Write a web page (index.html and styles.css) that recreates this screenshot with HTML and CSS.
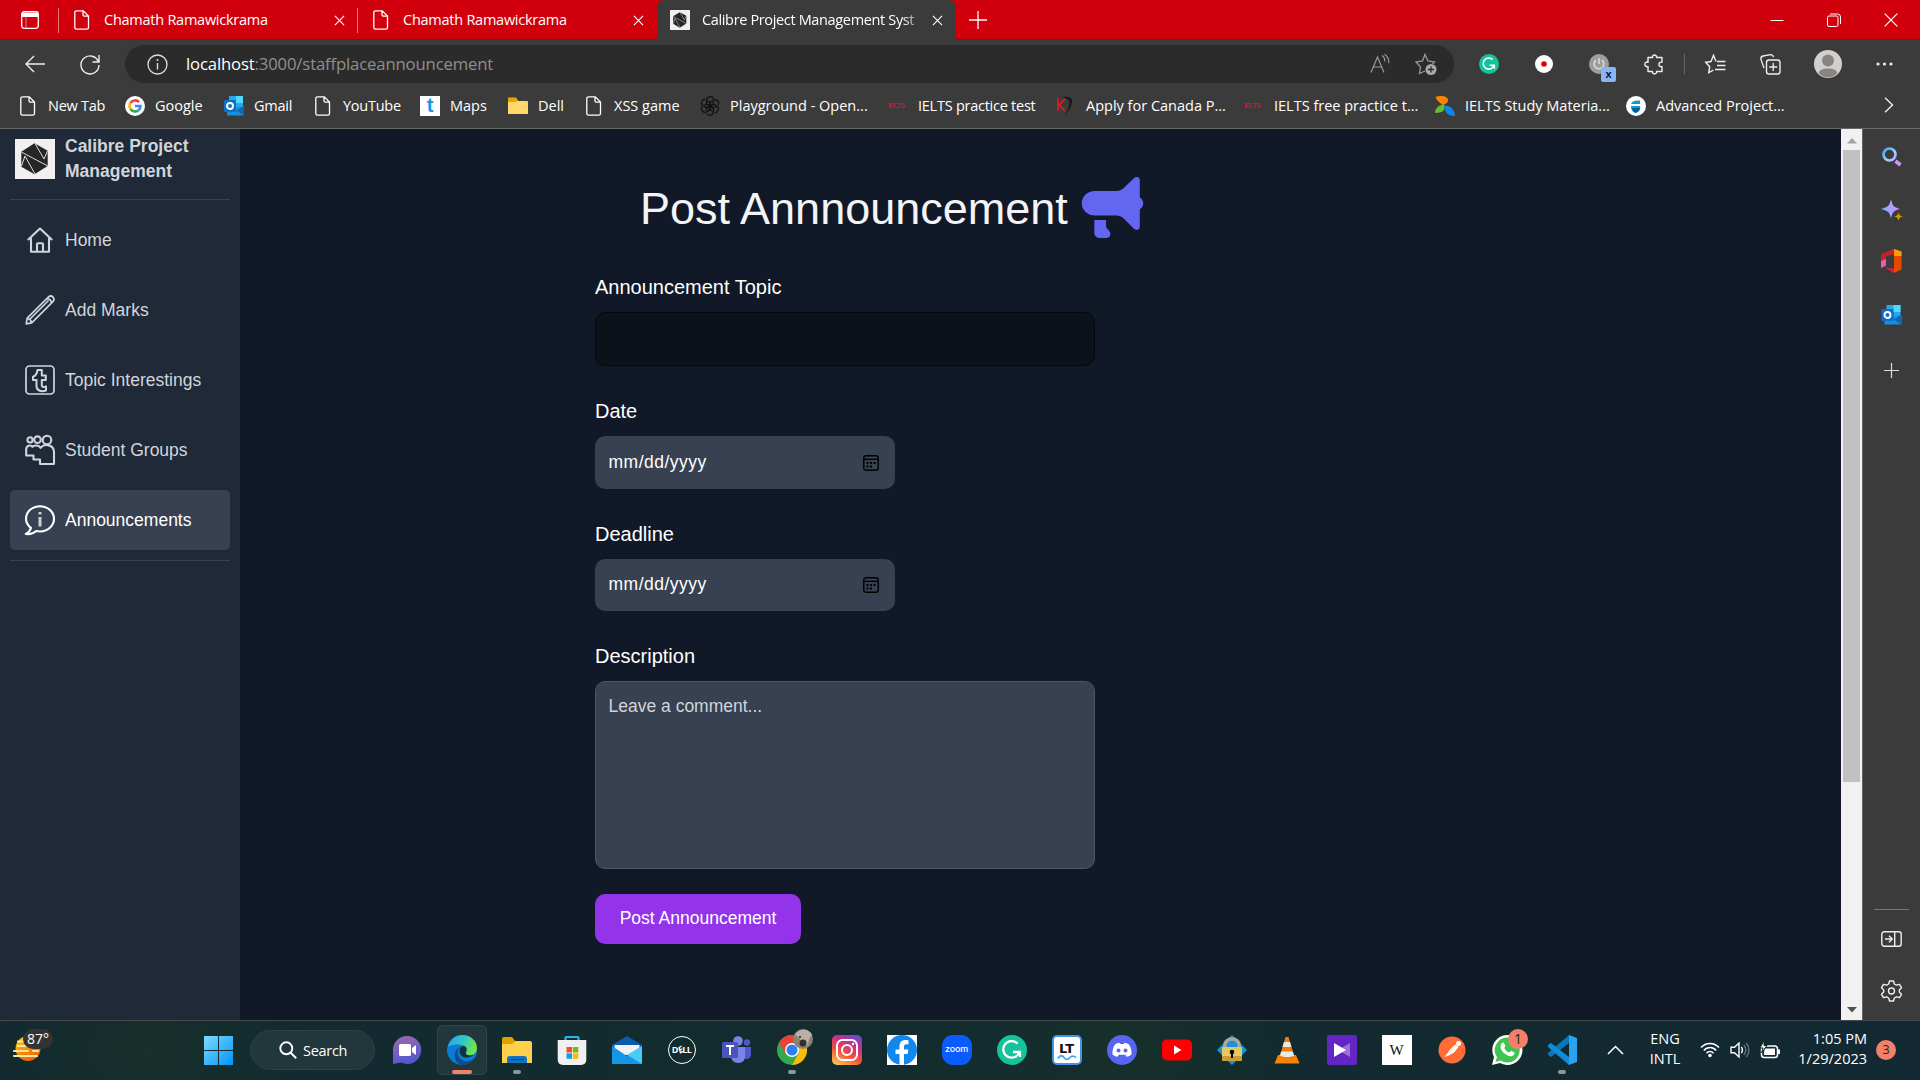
FILE: index.html
```html
<!DOCTYPE html>
<html lang="en">
<head>
<meta charset="utf-8">
<title>Calibre Project Management System</title>
<link rel="stylesheet" href="styles.css">
</head>
<body>
<svg class="defs" width="0" height="0">
  <defs>
    <symbol id="file" viewBox="0 0 20 20"><path d="M4.5.8h6.800l5.200 5.200v11.500a1.700 1.700 0 0 1-1.700 1.700H4.500a1.700 1.700 0 0 1-1.700-1.700V2.500A1.700 1.700 0 0 1 4.500.8zM11 1v3.500a1.700 1.700 0 0 0 1.700 1.700h3.600" fill="none" stroke="#fff" stroke-width="1.300"/></symbol>
    <symbol id="close" viewBox="0 0 12 12"><path d="M1 1l10 10M11 1L1 11" fill="none" stroke="#fff" stroke-width="1.200"/></symbol>
    <symbol id="outlook" viewBox="0 0 20 20"><path d="M5 0h14v14H5z" fill="#28a8ea"/><path d="M12 0h7v7h-7z" fill="#50d9ff"/><path d="M5 7h7v7H5z" fill="#0364b8"/><path d="M3 19.500V13l17-3v9.500z" fill="#1490df"/><path d="M20 10v9.500l-8-5z" fill="#1066b5"/><rect y="4" width="12" height="12" rx="1" fill="#0f6fc6"/><circle cx="6" cy="10" r="3" fill="none" stroke="#fff" stroke-width="1.900"/></symbol>
    <symbol id="grammarly" viewBox="0 0 30 30"><circle cx="15" cy="15" r="15" fill="#15c39a"/><path d="M20.500 8.500A8.300 8.300 0 1 0 22.500 17M16 17h7v5" fill="none" stroke="#fff" stroke-width="2.300"/></symbol>
    <symbol id="brand" viewBox="0 0 40 40"><path fill="#f1eff0" d="M0 0h40v40H0z"/><path fill="#242526" d="M19.500 4.300l13.200 7.400V27l-13.200 8.300-13.200-7.600v-15z"/><path d="M20 4.500L29 20l3.500-8M6.300 13l26.500 14M6.500 27L10 17l10 18" fill="none" stroke="#ddd" stroke-width="1"/></symbol>
    <symbol id="calendar" viewBox="0 0 16 16"><rect x=".8" y=".8" width="14.400" height="14.400" rx="2" fill="none" stroke="#000" stroke-width="1.400"/><path d="M1 4.300h14" stroke="#000" stroke-width="1.300"/><path d="M3.500 8h2m1.500 0h2m1.500 0h2M3.500 11.500h2m1.500 0h2" stroke="#000" stroke-width="1.900"/></symbol>
  </defs>
</svg>

<header class="chrome">
  <div class="tabstrip">
    <svg class="tab-menu" width="18" height="18" viewBox="0 0 18 18"><rect x=".7" y=".7" width="16.600" height="16.600" rx="2.500" fill="none" stroke="#fff" stroke-width="1.300"/><path d="M1 1.500h16V6H1z" fill="#fff"/><path d="M5 6v11" stroke="#fff" stroke-opacity=".5"/></svg>
    <div class="tab"><svg width="20" height="20"><use href="#file"/></svg><span class="tab-title">Chamath Ramawickrama</span><svg width="11" height="11"><use href="#close"/></svg></div>
    <div class="tab second"><svg width="20" height="20"><use href="#file"/></svg><span class="tab-title">Chamath Ramawickrama</span><svg width="11" height="11"><use href="#close"/></svg></div>
    <div class="tab active"><svg width="20" height="20"><use href="#brand"/></svg><span class="tab-title fade">Calibre Project Management Syst</span><svg width="11" height="11"><use href="#close"/></svg></div>
    <svg class="new-tab" width="18" height="18" viewBox="0 0 18 18"><path d="M9 0v18M0 9h18" stroke="#fff" stroke-width="1.300"/></svg>
    <div class="window-buttons">
      <svg width="14" height="14" viewBox="0 0 14 14"><path d="M.5 7.500h13" stroke="#fff"/></svg>
      <svg width="14" height="14" viewBox="0 0 14 14"><rect x=".5" y="3" width="10.500" height="10.500" rx="1.500" fill="none" stroke="#fff"/><path d="M3 1h7.500a3 3 0 0 1 3 3v7" fill="none" stroke="#fff"/></svg>
      <svg width="14" height="14" viewBox="0 0 14 14"><path d="M.7.7l12.600 12.600M13.300.7L.7 13.300" stroke="#fff" stroke-width="1.200"/></svg>
    </div>
  </div>

  <div class="toolbar">
    <div class="cell"><svg width="20" height="18" viewBox="0 0 20 18"><path d="M20 9H1M9 1L1 9l8 8" fill="none" stroke="#eee" stroke-width="1.400"/></svg></div>
    <div class="cell"><svg width="20" height="20" viewBox="0 0 20 20"><path d="M18.500 8A9 9 0 1 0 19 11M19 1v7h-6.500" fill="none" stroke="#eee" stroke-width="1.400"/></svg></div>
    <div class="address">
      <svg width="21" height="21" viewBox="0 0 21 21"><circle cx="10.500" cy="10.500" r="9.500" fill="none" stroke="#ddd" stroke-width="1.300"/><path d="M10.500 9v6.500" stroke="#ddd" stroke-width="1.400"/><circle cx="10.500" cy="6" r="1" fill="#ddd"/></svg>
      <span class="url"><b>localhost</b>:3000/staffplaceannouncement</span>
      <svg width="20" height="20" viewBox="0 0 20 20"><path d="M1 18.500L7.500 3 14 18.500M3.500 13h8M12 1.500c2 1.300 3 3.500 2.800 6M14.500.3c3 2 4.500 5.500 4.300 9" fill="none" stroke="#999" stroke-width="1.200"/></svg>
      <svg width="22" height="22" viewBox="0 0 22 22"><path d="M10 18l-5.500 2.500 1-6.500L1 9l6.500-1L10 1.500 13 8l6.500 1-2 2" fill="none" stroke="#999" stroke-width="1.300"/><circle cx="16" cy="16.500" r="5.500" fill="#aaa"/><path d="M16 13.500v6M13 16.500h6" stroke="#2b2b2b" stroke-width="1.300"/></svg>
    </div>
    <div class="extensions">
      <div class="cell"><svg width="20" height="20"><use href="#grammarly"/></svg></div>
      <div class="cell"><svg width="18" height="18"><circle cx="9" cy="9" r="9" fill="#fff"/><circle cx="9" cy="9" r="2.800" fill="#e60000"/></svg></div>
      <div class="cell power"><svg width="20" height="20" viewBox="0 0 20 20"><circle cx="10" cy="10" r="10" fill="#9d9d9d"/><path d="M7 6.200a4.800 4.800 0 1 0 6 0M10 4v6" fill="none" stroke="#ddd" stroke-width="1.500"/></svg><span class="power-badge">x</span></div>
      <div class="cell"><svg width="20" height="20" viewBox="0 0 20 20"><path d="M4 3.500h4.500c-.8-3.300 4.800-3.300 4 0H18v4.700c-4.200-1-4.200 5.400 0 4.300v5h-5.500c.8 3.300-4.800 3.300-4 0H4v-5c-4.200 1-4.200-5.400 0-4.300z" fill="none" stroke="#eee" stroke-width="1.400" stroke-linejoin="round"/></svg></div>
      <i class="toolbar-rule"></i>
      <div class="cell fav"><svg width="21" height="20" viewBox="0 0 21 20"><path d="M11 7.500L8.500 1.300 6 7.500l-5.300.7 4 4.500-1 6 4.800-2.700M12 7.500h8.500M12 11.500h8.500M10 15.500h10.500" fill="none" stroke="#eee" stroke-width="1.400"/></svg></div>
      <div class="cell"><svg width="21" height="21" viewBox="0 0 21 21"><path d="M4 14L1 5.500C.5 3.500 1 2.500 3 2l7.500-1.300c1.500 0 2.500.5 3 2.500" fill="none" stroke="#eee" stroke-width="1.300"/><rect x="6.500" y="6" width="13.500" height="14" rx="2.500" fill="none" stroke="#eee" stroke-width="1.400"/><path d="M13.200 9v8M9.200 13h8" stroke="#eee" stroke-width="1.300"/></svg></div>
      <div class="cell"><svg width="28" height="28" viewBox="0 0 28 28"><circle cx="14" cy="14" r="14" fill="#d2d0ce"/><circle cx="14" cy="10.500" r="6" fill="#8a8481"/><path d="M4.500 22.500C7 17 21 17 23.500 22.500 19 29 9 29 4.500 22.500z" fill="#8a8481"/></svg></div>
      <div class="cell dots"><svg width="17" height="4" viewBox="0 0 17 4"><g fill="#eee"><circle cx="2" cy="2" r="1.600"/><circle cx="8.500" cy="2" r="1.600"/><circle cx="15" cy="2" r="1.600"/></g></svg></div>
    </div>
  </div>

  <nav class="bookmarks">
    <div class="bm w107 tight"><svg width="20" height="20"><use href="#file"/></svg>New Tab</div>
    <div class="bm w99"><svg width="20" height="20" viewBox="0 0 20 20"><circle cx="10" cy="10" r="10" fill="#fff"/><g fill="none" stroke-width="2.600"><path d="M5.500 7A5.500 5.500 0 0 1 14 6" stroke="#ea4335"/><path d="M5.500 13a5.500 5.500 0 0 1 0-6" stroke="#fbbc05"/><path d="M13.500 14.200A5.500 5.500 0 0 1 5.500 13" stroke="#34a853"/><path d="M10 10h5.500c0 2-.8 3.300-2 4.200" stroke="#4285f4"/></g></svg>Google</div>
    <div class="bm w89 tight"><svg width="20" height="20"><use href="#outlook"/></svg>Gmail</div>
    <div class="bm w107 tight"><svg width="20" height="20"><use href="#file"/></svg>YouTube</div>
    <div class="bm w88"><span class="t-icon">t</span>Maps</div>
    <div class="bm w76"><svg width="20" height="20" viewBox="0 0 20 20"><path d="M0 2h8l2 3h9a1 1 0 0 1 1 1v12H0z" fill="#ffd76a"/><path d="M0 1.500h8l1.500 2.300L8 6H0z" fill="#e5a800"/></svg>Dell</div>
    <div class="bm w116"><svg width="20" height="20"><use href="#file"/></svg>XSS game</div>
    <div class="bm w188"><svg width="20" height="20" viewBox="0 0 20 20"><g fill="none" stroke="#111" stroke-width="1.200"><path id="petal" d="M6.500 8V4.500C6.500.5 11.500-.5 13.500 2.500M6.500 8l6.500 4 3-1.800"/><use href="#petal" transform="rotate(60 10 10)"/><use href="#petal" transform="rotate(120 10 10)"/><use href="#petal" transform="rotate(180 10 10)"/><use href="#petal" transform="rotate(240 10 10)"/><use href="#petal" transform="rotate(300 10 10)"/></g></svg>Playground - Open...</div>
    <div class="bm w168 tight"><span class="ielts">IELTS</span>IELTS practice test</div>
    <div class="bm w188"><svg width="20" height="20" viewBox="0 0 20 20"><path d="M6 1c5-1 10 0 10 4s-3 10-7 14c3-5 5-9 4.500-13S9 2 6 1z" fill="#161616"/><path d="M2 2v13M9 3L3 9l6 6" fill="none" stroke="#c8202c" stroke-width="1.900"/></svg>Apply for Canada P...</div>
    <div class="bm w191"><span class="ielts">IELTS</span>IELTS free practice t...</div>
    <div class="bm w191"><svg width="20" height="20" viewBox="0 0 20 20"><path d="M.5 1C5-1 13 0 13 4c0 3-3 4-5 5C5 7 2 5 .5 1z" fill="#ff8200"/><path d="M9 8c2 5 0 9-9 9 0-5 4-8 9-9z" fill="#65bc2e"/><path d="M9.500 10c5-1 10 3 10.500 10-6 0-10-2-10.500-10z" fill="#0a86ee"/></svg>IELTS Study Materia...</div>
    <div class="bm w191"><svg width="20" height="20" viewBox="0 0 20 20"><circle cx="10" cy="10" r="10" fill="#fff"/><path d="M5 8c1-3 5-4 9-3.500V8zM5 10h9c1 3-1 6-4.500 7C6 16 5 13 5 10z" fill="#1497d1"/><path d="M6 12h8c0 2-2 4-4.500 5C8 16 6.500 14 6 12z" fill="#075a92"/></svg>Advanced Project...</div>
    <svg class="more" width="10" height="16" viewBox="0 0 10 16"><path d="M1 .8L8.500 8 1 15.200" fill="none" stroke="#eee" stroke-width="1.400"/></svg>
  </nav>
</header>

<div class="viewport">
  <aside class="sidebar">
    <div class="brand"><svg width="40" height="40"><use href="#brand"/></svg><span>Calibre Project<br>Management</span></div>
    <nav class="menu">
      <a class="item"><svg width="30" height="30" viewBox="0 0 30 30"><path d="M2.800 15L15 3.600 27.200 15M6 13v13.800h18V13M12 26.500v-7.300a1 1 0 0 1 1-1h4a1 1 0 0 1 1 1v7.300"/></svg>Home</a>
      <a class="item"><svg class="thin" width="30" height="30" viewBox="0 0 30 30"><path d="M1.200 28.800l1-5.600L23.300 2.100c3.500-3 7.500 1.500 4.600 4.600L6.700 27.800zM22 3.600c2.500.2 4.200 2 4.400 4.400M2.500 23.500c2 .3 3.500 1.800 4 4M5 24L23.500 5.500"/></svg>Add Marks</a>
      <a class="item"><svg class="thin" width="30" height="30" viewBox="0 0 30 30"><rect x="1" y="1" width="28" height="28" rx="3.500"/><path class="t-outline" d="M12.500 5h4.300v5.500h4V15h-4v5.300c0 2 2 2 4.200 1v4.200c-4 1.500-9.500.8-9.500-4.500v-6H8v-3.300c2.500-.8 4-3 4.500-6.700z"/></svg>Topic Interestings</a>
      <a class="item"><svg width="30" height="30" viewBox="0 0 30 30"><circle cx="5" cy="4.900" r="2.600"/><circle cx="12.500" cy="4.700" r="3.300"/><circle cx="22" cy="5" r="4.300"/><path d="M1.200 20.500v-6c0-4 4-5.200 6.300-2.700 1.800-1.800 6.300-2 8 1 4-4.500 13.500-3.500 13.500 4.500V29H15v-4.500H8.500v-4z"/></svg>Student Groups</a>
      <a class="item current"><svg width="30" height="30" viewBox="0 0 30 30"><path d="M6 22.800C3 20.500 1 17.500 1 13.700 1 6.700 7.300 1.200 15 1.200S29 6.800 29 13.800 22.700 26.500 15 26.500l-4-.5C8.500 28.500 4 29.300.8 29 3.500 27.500 5.500 25 6 22.800z"/><path class="i-stem" d="M15 12v9.500M15 7v2.600"/></svg>Announcements</a>
    </nav>
  </aside>

  <main class="content">
    <h1><span>Post Annnouncement</span><svg width="61" height="61" viewBox="0 0 57 61" preserveAspectRatio="none"><path fill="#6366f1" d="M12 14h20c3 0 5-1 7-3L48.500 1.200C50.500-.9 54 0 54 3v17.500a7 7 0 0 1 0 11.800V50c0 3-3.500 3.900-5.500 1.800L39 41.500c-2-2-4-3-7-3H12a12.200 12.200 0 0 1 0-24.500zM11.500 43h11v6c0 3 4 4 4 8 0 2.500-1.500 4-4 4H17c-3 0-5.500-2-5.500-5z"/></svg></h1>
    <label>Announcement Topic</label>
    <div class="field topic"></div>
    <label>Date</label>
    <div class="field date"><span>mm/dd/yyyy</span><svg width="16" height="16"><use href="#calendar"/></svg></div>
    <label>Deadline</label>
    <div class="field date deadline"><span>mm/dd/yyyy</span><svg width="16" height="16"><use href="#calendar"/></svg></div>
    <label>Description</label>
    <div class="field comment">Leave a comment...</div>
    <div class="submit">Post Announcement</div>
  </main>

  <div class="scrollbar">
    <svg width="10" height="6"><path d="M5 0l5 5.500H0z" fill="#a3a3a3"/></svg>
    <div class="thumb"></div>
    <svg class="down" width="10" height="6"><path d="M5 5.500L0 0h10z" fill="#505050"/></svg>
  </div>

  <aside class="edgebar">
    <svg width="20" height="20" viewBox="0 0 20 20"><defs><linearGradient id="sg" x2="1" y2="1"><stop stop-color="#4f9df5"/><stop offset=".6" stop-color="#8ed8ff"/><stop offset="1" stop-color="#d59bff"/></linearGradient></defs><circle cx="7.500" cy="7.500" r="6" fill="none" stroke="url(#sg)" stroke-width="2.600"/><path d="M13.500 14l5 4" stroke="#c798f5" stroke-width="3.600"/></svg>
    <svg class="e2" width="22" height="22" viewBox="0 0 22 22"><defs><linearGradient id="sp" x2="1"><stop stop-color="#78b4ff"/><stop offset="1" stop-color="#d98cff"/></linearGradient></defs><path d="M10 0c1.500 7 2.500 8 9 10-6.500 1.500-7.500 3-9 9.500C8.500 13 7.500 12 0 10 7 8 8.500 7 10 0z" fill="url(#sp)"/><path d="M17.500 13c.5 3 1.500 4 4.500 4.500-3 .5-4 1.500-4.500 4.500-.5-3-1.500-4-4.500-4.500 3-.5 4-1.500 4.500-4.500z" fill="#d39a10"/></svg>
    <svg class="e3" width="21" height="24" viewBox="0 0 21 24"><path d="M13 0l7.500 2.500v18L13 24z" fill="#e34a00"/><path d="M13 0l7.500 2.500V7H13z" fill="#ff9a00"/><path d="M13 0v5L5 7.500v9L0 19V5z" fill="#c4202d"/><path d="M0 12l5-2v6.500L0 19z" fill="#e85caf"/><path d="M4 18.500l9 1V24z" fill="#d6213d"/></svg>
    <svg class="e4" width="21" height="20"><use href="#outlook"/></svg>
    <svg class="e5" width="15" height="15" viewBox="0 0 15 15"><path d="M7.500 0v15M0 7.500h15" stroke="#ddd" stroke-width="1.200"/></svg>
    <i></i>
    <svg class="e6" width="21" height="16" viewBox="0 0 21 16"><rect x=".8" y=".8" width="19.400" height="14.400" rx="2.500" fill="none" stroke="#eee" stroke-width="1.400"/><path d="M13.700 1v14M4 8h7M8 4.800L11.200 8 8 11.200" fill="none" stroke="#eee" stroke-width="1.400"/></svg>
    <svg class="e7" width="21" height="22" viewBox="0 0 21 22"><path d="M8.500 1h4l.8 3 2.200 1.200 3-.9 2 3.400L18.300 10v2l2.200 2.300-2 3.400-3-.9-2.200 1.200-.8 3h-4l-.8-3-2.200-1.200-3 .9-2-3.400L2.700 12v-2L.5 7.700l2-3.400 3 .9L7.700 4z" fill="none" stroke="#eee" stroke-width="1.400" stroke-linejoin="round"/><circle cx="10.500" cy="11" r="3" fill="none" stroke="#eee" stroke-width="1.400"/></svg>
  </aside>
</div>

<footer class="taskbar">
  <div class="weather"><svg width="28" height="26" viewBox="0 0 28 26"><defs><linearGradient id="sun" x2=".5" y2="1"><stop stop-color="#ffd400"/><stop offset="1" stop-color="#ee6405"/></linearGradient></defs><circle cx="15" cy="12.500" r="12.500" fill="url(#sun)"/><path d="M5 5.500h8M5 10h11M1 15h14M20 15h5M1 20h23" stroke="#ffe3a5" stroke-width="2.200" stroke-linecap="round"/></svg><span>87°</span></div>
  <div class="apps">
    <svg class="start" width="29" height="29" viewBox="0 0 29 29"><defs><linearGradient id="win" x2="1" y2="1"><stop stop-color="#7bdcff"/><stop offset="1" stop-color="#0094f8"/></linearGradient></defs><path d="M0 0h14v14H0zM15 0h14v14H15zM0 15h14v14H0zM15 15h14v14H15z" fill="url(#win)"/></svg>
    <div class="search"><svg width="18" height="18" viewBox="0 0 18 18"><circle cx="7.300" cy="7.300" r="6" fill="none" stroke="#fff" stroke-width="1.900"/><path d="M11.700 11.700l5.500 5.500" stroke="#fff" stroke-width="2"/></svg>Search</div>
    <div class="app chat"><svg width="30" height="30" viewBox="0 0 30 30"><defs><linearGradient id="cg" x2=".3" y2="1"><stop stop-color="#a06aa8"/><stop offset="1" stop-color="#5558d0"/></linearGradient></defs><path d="M15 1a14 14 0 1 1-6 26.500L1 29V15A14 14 0 0 1 15 1z" fill="url(#cg)"/><rect x="7" y="9" width="12" height="12" rx="1.500" fill="#fff"/><path d="M20 13l4-3v10l-4-3z" fill="#fff"/></svg></div>
    <div class="app edge"><svg width="30" height="30" viewBox="0 0 30 30"><defs><linearGradient id="eg" x2="1" y2=".3"><stop stop-color="#26a8e4"/><stop offset=".6" stop-color="#35c6c8"/><stop offset="1" stop-color="#70e548"/></linearGradient></defs><circle cx="15" cy="15" r="15" fill="#0b7cd3"/><path d="M1 12C3 4 9 0 15 0c9 0 15 6 15 13 0 5-4 8-9 7-3-.5-3-2-2-4 1-3-1-6-5-6C8 9 3 10 1 12z" fill="url(#eg)"/><path d="M13 12c-4 3-3 12 4 14 4 1 8-1 10-3-2 5-7 7-12 7-7-1-11-13-2-18z" fill="#114a8b"/><path d="M13 13.500c-1.500 4 1 9 6 9 3 0 6-1 8-2.500-3 1-6 .5-7.500-.5-1-.5-.8-2 0-3.500 1-3-1-5-3.500-5-1.500.5-2.500 1.500-3 2.500z" fill="#12333a"/></svg></div>
    <div class="app run"><svg width="30" height="30" viewBox="0 0 30 30"><path d="M0 4a2 2 0 0 1 2-2h8l3 4-3 4H0z" fill="#e2a000"/><path d="M0 9h10l3-3h15a2 2 0 0 1 2 2v20H0z" fill="#ffd04c"/><path d="M5 28v-4a3 3 0 0 1 3-3h14a3 3 0 0 1 3 3v4z" fill="#0f74c4"/><path d="M8.500 24.500h13" stroke="#064f91" stroke-width="1.300"/></svg></div>
    <div class="app"><svg width="30" height="30" viewBox="0 0 30 30"><path d="M8.500 7V3a1 1 0 0 1 1-1h11a1 1 0 0 1 1 1v4" fill="none" stroke="#27b5ee" stroke-width="2.200"/><path d="M.7 5h28.600v20a5 5 0 0 1-5 5H5.700a5 5 0 0 1-5-5z" fill="#f0f0f0"/><path d="M9.500 12H15v5.500H9.500z" fill="#f25022"/><path d="M15.800 12h5.500v5.500h-5.500z" fill="#7fba00"/><path d="M9.500 18.300H15v5.500H9.500z" fill="#00a4ef"/><path d="M15.800 18.300h5.500v5.500h-5.500z" fill="#ffb900"/></svg></div>
    <div class="app"><svg width="30" height="30" viewBox="0 0 30 30"><path d="M0 10L15 1l15 9v5H0z" fill="#0b5cad"/><path d="M2.500 10h25v10h-25z" fill="#f3f3f3"/><path d="M0 11l15 10L30 11v18H0z" fill="#1596e6"/><path d="M30 11v18L15 20z" fill="#45cdf5"/></svg></div>
    <div class="app"><span class="dell">D<i>E</i>LL</span></div>
    <div class="app"><svg width="30" height="30" viewBox="0 0 30 30"><circle cx="25" cy="7.500" r="3.200" fill="#5059c9"/><path d="M20 12h9v7c0 3-2 5-4.500 5S20 22 20 19z" fill="#5059c9"/><circle cx="16" cy="6" r="4.800" fill="#7b83eb"/><path d="M9 12h14v9c0 5-3 7-7 7s-7-3-7-7z" fill="#7b83eb"/><rect y="7" width="16" height="16" rx="1.500" fill="#4b53bc"/><path d="M4 11h8M8 11v9" stroke="#fff" stroke-width="2"/></svg></div>
    <div class="app run"><svg width="36" height="36" viewBox="0 0 36 36" class="gchrome"><circle cx="15" cy="21" r="15" fill="#34a853"/><path d="M2 13.500A15 15 0 0 1 28 13.500H15L8.500 25z" fill="#ea4335"/><path d="M28 13.500A15 15 0 0 1 15 36l6.500-11.500L22 13.500z" fill="#fbbc05"/><circle cx="15" cy="21" r="7" fill="#fff"/><circle cx="15" cy="21" r="5.500" fill="#2f7df0"/><circle cx="26" cy="10" r="10" fill="#8b8175"/><path d="M18 5.500C22-1.500 33-.5 35 6c-3 3-3 6-4 9-2 4-8 2-7-3-1-3-4-5-6-6.500z" fill="#b9b0a5"/><circle cx="26" cy="14" r="3.500" fill="#36302b"/><circle cx="23" cy="8" r="1" fill="#28221d"/></svg></div>
    <div class="app"><svg width="30" height="30" viewBox="0 0 30 30"><defs><linearGradient id="ig" x1=".2" y1="1" x2=".7" y2="0"><stop stop-color="#fdc04e"/><stop offset=".4" stop-color="#f0503c"/><stop offset=".75" stop-color="#c52d8f"/><stop offset="1" stop-color="#6a4bd0"/></linearGradient></defs><rect width="30" height="30" rx="5" fill="url(#ig)"/><rect x="5" y="5" width="20" height="20" rx="5.500" fill="none" stroke="#fff" stroke-width="2"/><circle cx="15" cy="15" r="5" fill="none" stroke="#fff" stroke-width="2"/><circle cx="21" cy="9" r="1.200" fill="#fff"/></svg></div>
    <div class="app"><svg width="30" height="30" viewBox="0 0 30 30"><path fill="#fff" d="M0 0h30v30H0z"/><circle cx="15" cy="15" r="15" fill="#1188ee"/><path d="M12.500 30V19H8.500v-4.500h4v-3.300c0-4 2.300-6.200 6-6.200 1.700 0 3 .3 3 .3v4h-2c-2 0-2.500 1-2.500 2.500v2.700h4.300l-.7 4.500H17v11z" fill="#fff"/></svg></div>
    <div class="app"><span class="zoom">zoom</span></div>
    <div class="app"><svg width="30" height="30"><use href="#grammarly"/></svg></div>
    <div class="app"><span class="lt">LT<svg width="18" height="5" viewBox="0 0 18 5"><path d="M0 3.500C2 0 4 0 6 2.500s4 2.500 6 0 4-1.500 6 0" fill="none" stroke="#45a5f0" stroke-width="1.800"/></svg></span></div>
    <div class="app"><svg width="30" height="30" viewBox="0 0 30 30"><circle cx="15" cy="15" r="15" fill="#5865f2"/><path d="M8 9.500c1.500-1 3-1.500 4.500-1.700l.7 1.200h3.600l.7-1.200c1.500.2 3 .7 4.500 1.700 2 3 2.800 6.500 2.500 10-1.500 1.200-3 2-5 2.300l-1.200-2h-6.600l-1.200 2c-2-.3-3.500-1.100-5-2.300-.3-3.500.5-7 2.500-10z" fill="#fff"/><circle cx="11.500" cy="15.500" r="2" fill="#5865f2"/><circle cx="18.500" cy="15.500" r="2" fill="#5865f2"/></svg></div>
    <div class="app"><svg width="30" height="22" viewBox="0 0 30 22"><rect y=".5" width="30" height="21" rx="5" fill="#f00"/><path d="M12 6.500v9l7.500-4.500z" fill="#fff"/></svg></div>
    <div class="app"><svg width="30" height="30" viewBox="0 0 30 30"><path d="M15 0l15 15-15 15L0 15z" fill="#1994dc"/><path d="M8 14V9.500a7 5.500 0 0 1 14 0V14" fill="none" stroke="#a9a9a4" stroke-width="3.500"/><rect x="5" y="12" width="20" height="14" rx="1" fill="#e9c760"/><path d="M5 21h20v4a1 1 0 0 1-1 1H6a1 1 0 0 1-1-1z" fill="#c99a3b"/><circle cx="15" cy="17" r="2.300"/><path d="M14 18h2v5h-2z"/></svg></div>
    <div class="app"><svg width="30" height="30" viewBox="0 0 30 30"><path d="M6 20h18l3.500 8.500h-25z" fill="#f58400"/><path d="M13.500 2h3l6 20c-3 3-12 3-15 0z" fill="#f27d00"/><path d="M12 7h6l1.500 5h-9zM9.200 16.500h11.600l1.200 4c-3 2-11 2-14 0z" fill="#e9eaec"/></svg></div>
    <div class="app"><svg width="30" height="30" viewBox="0 0 30 30"><rect width="30" height="30" rx="2" fill="#6425c5"/><path d="M23 8v14l-12-7z" fill="#b69be4" opacity=".65"/><path d="M7 8v14l12-7z" fill="#fff"/></svg></div>
    <div class="app"><span class="wiki">W</span></div>
    <div class="app"><svg width="30" height="30" viewBox="0 0 30 30"><circle cx="15" cy="15" r="13.500" fill="#ff6c37"/><path d="M8 22c3-4 6-8 11-12M10 21l7-4 4-5-3-2-5 5z" fill="#fff" stroke="#fff" stroke-width="1"/><circle cx="21.500" cy="8.500" r="2.500" fill="#fff"/></svg></div>
    <div class="app whatsapp"><svg width="30" height="30" viewBox="0 0 30 30"><path d="M15 0a15 15 0 1 1-7 28L0 30l2-8A15 15 0 0 1 15 0z" fill="#fff"/><path d="M15 2.500A12.500 12.500 0 1 1 8.500 25.500L3.500 27 5 22A12.500 12.500 0 0 1 15 2.500z" fill="#3fc351"/><path d="M10 8c1-1 2-.5 2.300.5l1 2.500c-.5 1.500-1.300 1.500-.8 2.500 1 2 2.500 3.300 4.500 4 1-.3 1.500-2 2.500-1.500l3 1.500c.5 3-3 4.500-5.500 3.500C12 19 9 16 8.500 12c0-2 .5-3 1.500-4z" fill="#fff"/></svg><span>1</span></div>
    <div class="app run"><svg width="30" height="30" viewBox="0 0 30 30"><path d="M22 0l8 3v24l-8 3z" fill="#2ba3ee"/><path d="M22 0v8L4 22l-3-2v-2z" fill="#0877bd"/><path d="M22 30v-8L4 8l-3 2v2z" fill="#118bd5"/></svg></div>
  </div>
  <div class="tray">
    <svg class="up" width="17" height="10" viewBox="0 0 17 10"><path d="M1 9l7.500-7.500L16 9" fill="none" stroke="#fff" stroke-width="1.500"/></svg>
    <div class="lang">ENG<br>INTL</div>
    <svg width="20" height="16" viewBox="0 0 20 16"><g fill="none" stroke="#fff" stroke-width="1.500"><path d="M1 5.500c5-5.500 13-5.500 18 0M3.800 8.500c3.500-4 9-4 12.400 0M6.500 11.300c2-2.300 5-2.300 7 0"/></g><circle cx="10" cy="13.500" r="1.800" fill="#fff"/></svg>
    <svg width="20" height="18" viewBox="0 0 20 18"><path d="M1 6.200h3.500L9 2v14l-4.500-4.200H1z" fill="none" stroke="#fff" stroke-width="1.400"/><path d="M11.300 6c1.500 2 1.500 4 0 6" fill="none" stroke="#fff" stroke-width="1.400"/><path d="M13.800 4c2.500 3 2.500 7 0 10M16.300 2c3.500 4 3.500 10 0 14" fill="none" stroke="#667a7c" stroke-width="1.300"/></svg>
    <svg width="20" height="18" viewBox="0 0 20 18"><rect x="1.500" y="5" width="16" height="11.500" rx="2.800" fill="none" stroke="#fff" stroke-width="1.500"/><path d="M5 7.500h10v6.500H4v-3zM18 8.500h2v4.500h-2z" fill="#fff"/><path d="M4-.500L0 7h3L1.500 12 7 4.500H4z" fill="#fff" stroke="#12282c"/></svg>
    <div class="clock">1:05 PM<br>1/29/2023</div>
    <span class="count">3</span>
  </div>
</footer>
</body>
</html>
```

FILE: styles.css
```css
* { box-sizing: border-box; }
html, body { margin: 0; height: 100%; overflow: hidden; }
body {
  display: flex;
  flex-direction: column;
  background: #111827;
  color: #fff;
  font-family: "Open Sans", "Noto Sans", sans-serif;
  font-size: 14.5px;
}
svg { display: block; flex: none; overflow: visible; }
.defs { position: absolute; }

/* browser window */
.chrome { flex: 0 0 129px; background: #3b3b3b; border-bottom: 1px solid #69696b; }
.tabstrip { display: flex; align-items: center; height: 40px; background: #d1000c; box-shadow: inset 0 -2px 2px -1px #a0000d; }
.tab-menu { margin: 0 20px 0 21px; }
.tab { display: flex; align-items: center; width: 299px; height: 40px; padding: 0 13px; position: relative; }
.tab:not(.active)::before { content: ""; position: absolute; left: -1px; top: 8px; width: 1px; height: 25px; background: #e77; }
.tab-title { flex: 1; margin: 0 0 0 12px; padding-bottom: 2px; white-space: nowrap; letter-spacing: -0.25px; }
.tab.active { width: 299px; background: #3b3b3b; border-radius: 7px 7px 0 0; }
.fade { margin-right: 8px; letter-spacing: -0.35px; mask-image: linear-gradient(90deg, #000 90%, transparent 101%); }
.new-tab { margin-left: 13px; }
.window-buttons { display: flex; gap: 43px; margin-left: auto; padding-right: 22px; }

.toolbar { display: flex; align-items: center; height: 48px; padding-left: 7px; }
.cell { display: flex; align-items: center; justify-content: center; width: 55px; flex: none; }
.address { display: flex; align-items: center; width: 1329px; height: 38px; margin-left: 8px; border-radius: 19px; background: #2b2b2b; padding: 0 17px 0 22px; }
.url { flex: 1; margin-left: 18px; padding-bottom: 1px; font-size: 16.7px; letter-spacing: -0.15px; color: #8f8f8f; }
.url b { font-weight: 400; color: #fff; }
.address svg:last-child { margin-left: 25px; }
.extensions { display: flex; align-items: center; margin-left: 7px; }
.power { position: relative; }
.power-badge { position: absolute; left: 30px; top: 13px; width: 15px; height: 15px; border-radius: 2px; background: #8ab4f8; color: #111; font: bold 11px/14px "Liberation Sans", sans-serif; text-align: center; }
.toolbar-rule { width: 1px; height: 20px; margin: 0 3px; background: #666; }
.dots { margin-left: 2px; }
.fav { margin-left: 0; }
.fav + .cell + .cell { margin-left: 2px; }

.bookmarks { display: flex; align-items: center; height: 36px; padding: 0 0 2px 18px; }
.bm { display: flex; align-items: center; gap: 10px; flex: none; white-space: nowrap; }
.bm > :first-child { margin-top: 2px; }
.tight { letter-spacing: -0.25px; }
.w76 { width: 76px; } .w88 { width: 88px; } .w89 { width: 89px; } .w99 { width: 99px; }
.w107 { width: 107px; } .w116 { width: 116px; } .w168 { width: 168px; } .w188 { width: 188px; } .w191 { width: 191px; }
.t-icon { width: 20px; height: 20px; background: #fff; color: #1597e5; font: bold 20px/18px "Liberation Sans", sans-serif; text-align: center; }
.ielts { width: 20px; color: #d2122e; font: bold 7px/8px "Liberation Sans", sans-serif; letter-spacing: -0.6px; }
.more { margin-left: 67px; }

/* page */
.viewport { flex: 1; display: flex; min-height: 0; font-family: "Liberation Sans", Arial, sans-serif; }
.sidebar { width: 240px; flex: none; background: #1f2937; color: #d1d5db; padding: 0 10px; font-size: 17.5px; line-height: 25px; }
.brand { display: flex; gap: 10px; height: 71px; padding: 5px 5px 0; border-bottom: 1px solid #374151; font-weight: 700; }
.brand svg { margin-top: 5px; }
.menu { display: flex; flex-direction: column; gap: 10px; padding: 10px 0; border-bottom: 1px solid #374151; }
.item { display: flex; align-items: center; gap: 10px; height: 60px; padding-left: 15px; border-radius: 5px; }
.item svg { fill: none; stroke: currentColor; stroke-width: 2.1; stroke-linejoin: round; }
.item svg.thin { stroke-width: 1.7; }
.item .t-outline { stroke-width: 2; }
.item .i-stem { stroke-width: 3; opacity: .75; }
.current { background: #374151; color: #fff; }

.content { flex: 1; padding: 41px 0 0 355px; font-size: 17.5px; }
h1 { display: flex; align-items: flex-start; gap: 14px; height: 104px; margin: 0 0 0 45px; padding-top: 7px; font-size: 45px; font-weight: 400; line-height: 50px; color: #f3f4f6; }
h1 span { padding-top: 7px; }
label { display: block; height: 38px; padding-top: 1px; font-size: 20px; line-height: 25px; }
.field { border-radius: 10px; background: #374151; }
.topic { width: 500px; height: 54px; margin-bottom: 32px; background: #0d1119; border: 1px solid #05080e; }
.date { display: flex; align-items: center; justify-content: space-between; width: 300px; height: 53px; margin-bottom: 32px; padding: 0 16px 0 13.5px; letter-spacing: .5px; }
.deadline { height: 52px; padding-bottom: 1px; }
.comment { width: 500px; height: 188px; padding: 12px 12.500px; border: 1px solid #4b5563; line-height: 25px; color: #d1d5db; }
.submit { width: 206px; height: 50px; margin-top: 25px; border-radius: 10px; background: #9333ea; line-height: 48px; text-align: center; }

.scrollbar { display: flex; flex-direction: column; align-items: center; width: 21px; background: #f1f1f1; padding-top: 9px; }
.thumb { width: 17px; height: 632px; margin-top: 6px; background: #c1c1c1; }
.down { margin: auto 0 7px; }
.edgebar { display: flex; flex-direction: column; align-items: center; width: 58px; background: #3b3b3b; border-left: 1px solid #656565; padding-top: 18px; }
.e2 { margin-top: 32px; } .e3 { margin-top: 28px; } .e4 { margin-top: 32px; } .e5 { margin-top: 38px; }
.edgebar i { width: 35px; height: 1px; background: #777; margin-top: auto; }
.e6 { margin-top: 21px; } .e7 { margin: 33px 0 18px; }

/* taskbar */
.taskbar {
  flex: 0 0 60px; display: flex; align-items: center; border-top: 1px solid #42494e; padding-bottom: 1px;
  background:
    radial-gradient(ellipse 150px 100px at 150px 30px, #17302a, transparent),
    radial-gradient(ellipse 160px 100px at 1120px 30px, #17302a, transparent),
    linear-gradient(90deg, #122a30, #132c2e 50%, #122a30 80%, #132935);
}
.weather { position: relative; width: 204px; padding: 0 0 3px 13px; }
.weather span { position: absolute; left: 23px; top: -7px; width: 30px; height: 20px; border-radius: 10px; background: #333; font-size: 14px; line-height: 19px; text-align: center; }
.apps { display: flex; align-items: center; }
.search { display: flex; align-items: center; gap: 6px; width: 125px; height: 40px; margin: 0 4px 0 17px; padding-left: 28px; border-radius: 20px; border: 1px solid #2a4145; background: #21373b; letter-spacing: -0.3px; }
.app { position: relative; display: flex; align-items: center; justify-content: center; width: 55px; height: 50px; }
.edge { width: 50px; margin: 0 2px 0 3px; background: #21373b; border: 1px solid #2e4347; border-radius: 5px; }
.edge::after, .run::after { content: ""; position: absolute; bottom: 1px; left: 50%; width: 8px; height: 4px; margin-left: -4px; border-radius: 2px; background: #8c989a; }
.edge::after { width: 20px; margin-left: -10px; bottom: 0; background: #f4806a; }
.gchrome { margin: -6px 0 0 6px; }
.dell { width: 28px; height: 28px; border: 1.5px solid #fff; border-radius: 50%; font: bold 9px/25px "Open Sans", sans-serif; text-align: center; letter-spacing: -0.5px; }
.dell i { display: inline-block; transform: rotate(-30deg); }
.zoom { width: 30px; height: 30px; border-radius: 11px; background: #0b5cff; font: 500 9px/27px Inter, sans-serif; text-align: center; letter-spacing: -0.2px; }
.lt { display: flex; flex-direction: column; align-items: center; width: 30px; height: 30px; border: 2px solid #4592e8; border-radius: 5px; background: #fff; color: #111; font: bold 13px/13px "DejaVu Sans", sans-serif; padding-top: 5px; }
.wiki { width: 30px; height: 30px; background: #fff; color: #111; font: 15px/30px "Liberation Serif", serif; text-align: center; }
.whatsapp span { position: absolute; left: 29px; top: 4px; width: 20px; height: 20px; border-radius: 50%; background: #f4806a; color: #222; font-size: 14px; line-height: 19px; text-align: center; }
.tray { display: flex; align-items: center; margin-left: auto; padding-right: 24px; gap: 10px; line-height: 20px; }
.up { margin-right: 6px; }
.lang { width: 40px; margin: -2px 5px 0 5px; text-align: center; }
.clock { width: 77px; margin-top: -2px; text-align: right; }
.count { width: 20px; height: 20px; margin-left: -1px; border-radius: 50%; background: #f4806a; color: #222; font-size: 12.500px; line-height: 19px; text-align: center; }
```
